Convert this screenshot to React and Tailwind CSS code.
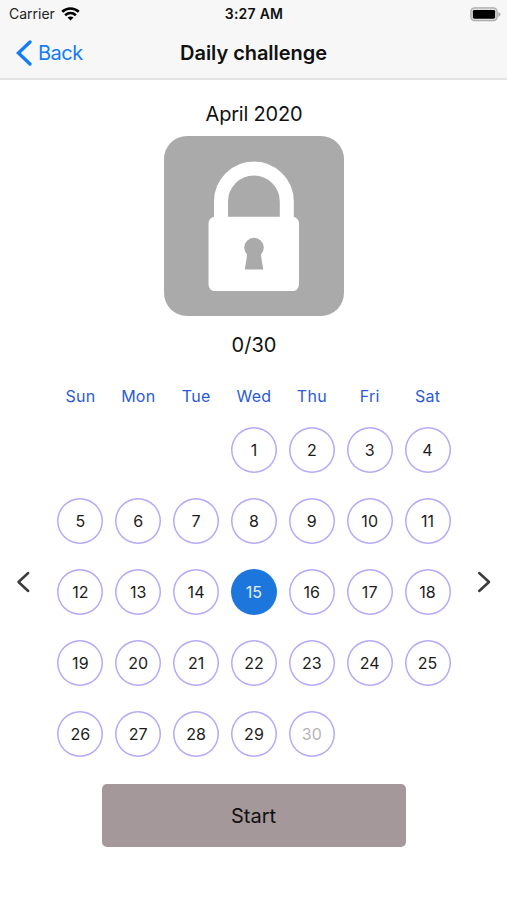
import clsx from 'clsx';

const WEEKDAYS = ['Sun', 'Mon', 'Tue', 'Wed', 'Thu', 'Fri', 'Sat'];
const DAYS_IN_MONTH = 30;
const TODAY = 15;

function WifiIcon() {
  return (
    <svg width="19" height="14" viewBox="0 0 19 14" fill="none" stroke="black" strokeWidth="2.6">
      <path d="M1.2 4.7C6 0.4 13 0.4 17.8 4.7" />
      <path d="M4.1 8.2C7.3 5.4 11.7 5.4 14.9 8.2" />
      <path d="M9.5 13.4L6.5 10.5C8.2 9 10.8 9 12.5 10.5Z" fill="black" stroke="none" />
    </svg>
  );
}

function BatteryIcon() {
  return (
    <svg width="31" height="15" viewBox="0 0 31 15">
      <rect x="0.9" y="0.9" width="26.2" height="12.8" rx="3.6" fill="#dcdcdc" stroke="#ababab" strokeWidth="1.3" />
      <rect x="2.9" y="2.9" width="22.2" height="8.8" rx="1.4" fill="black" />
      <path d="M28.3 5C31.2 6 31.2 8.8 28.3 9.8Z" fill="#ababab" />
    </svg>
  );
}

function LockBadge() {
  return (
    <svg className="block" width="180" height="180" viewBox="0 0 180 180">
      <rect width="180" height="180" rx="23" fill="#aaaaaa" />
      <path d="M57 84V65.5a32.9 32.9 0 0 1 65.8 0V84" fill="none" stroke="white" strokeWidth="14" />
      <rect x="44.5" y="80.8" width="90.5" height="74.3" rx="6.5" fill="white" />
      <circle cx="90" cy="111.6" r="9.8" fill="#aaaaaa" />
      <path d="M83.6 116H96.4L99.2 133.6H80.8Z" fill="#aaaaaa" />
    </svg>
  );
}

function Arrow({ d }) {
  return (
    <svg width="14" height="22" viewBox="0 0 14 22" fill="none" stroke="#3c3c3c" strokeWidth="2.5" strokeLinecap="round" strokeLinejoin="round">
      <path d={d} />
    </svg>
  );
}

function Day({ day }) {
  return (
    <div
      className={clsx(
        'flex h-[46px] w-[46px] items-center justify-center rounded-full text-base tracking-[0.1px]',
        day === TODAY && 'bg-[#1d76db] text-[#e4effb]',
        day !== TODAY && 'inset-ring-[1.5px] inset-ring-[#b5a9f8]',
        day === DAYS_IN_MONTH ? 'text-[#b4b4b4]' : day !== TODAY && 'text-[#1c1c1c]'
      )}
    >
      {day}
    </div>
  );
}

export default function App() {
  const days = Array.from({ length: DAYS_IN_MONTH }, (_, i) => i + 1);

  return (
    <div className="h-[900px] w-[507px] overflow-hidden bg-white font-['Inter',sans-serif] text-[#111]">
      <header className="h-20 border-b-2 border-[#e4e4e4] bg-[#f7f7f7]">
        <div className="grid h-7 grid-cols-3 items-center pr-[6px] pl-[9px]">
          <div className="flex items-center gap-[6px] text-sm text-[#222]">
            <span>Carrier</span>
            <WifiIcon />
          </div>
          <div className="-ml-[2px] text-center text-sm font-semibold tracking-[0.25px]">3:27 AM</div>
          <div className="flex justify-end">
            <BatteryIcon />
          </div>
        </div>
        <div className="grid h-[49px] grid-cols-[150px_1fr_150px] items-center">
          <button className="flex items-center gap-[5px] pl-4 text-xl tracking-[-0.5px] text-[#127cf9]">
            <svg width="17" height="26" viewBox="0 0 17 26" fill="none" stroke="#127cf9" strokeWidth="3.3" strokeLinecap="round">
              <path d="M14 2L2.4 13L14 24" />
            </svg>
            Back
          </button>
          <h1 className="text-center text-xl font-semibold tracking-[-0.05px] whitespace-nowrap">Daily challenge</h1>
        </div>
      </header>

      <main className="flex flex-col items-center">
        <h2 className="mt-5 h-9 pl-px text-xl leading-[29px] tracking-[-0.2px]">April 2020</h2>
        <LockBadge />
        <p className="mt-[15px] pl-px text-xl leading-[29px]">0/30</p>

        <div className="mt-6 flex w-full items-center justify-between px-4">
          <button className="mt-[22px]">
            <Arrow d="M12.2 2L2.5 11L12.2 20" />
          </button>
          <div className="ml-px grid w-[405px] grid-cols-7 justify-items-center gap-y-[25px]">
            {WEEKDAYS.map((name) => (
              <div key={name} className="-mb-3 h-[30px] text-base leading-6 tracking-[0.25px] text-[#2b5bd7]">
                {name}
              </div>
            ))}
            <div className="col-span-3" />
            {days.map((day) => (
              <Day key={day} day={day} />
            ))}
          </div>
          <button className="mt-[22px]">
            <Arrow d="M2.2 2L12 11L2.2 20" />
          </button>
        </div>

        <button className="mt-[27px] h-[63px] w-[304px] rounded-[5px] bg-[#a4989b] text-xl">Start</button>
      </main>
    </div>
  );
}
